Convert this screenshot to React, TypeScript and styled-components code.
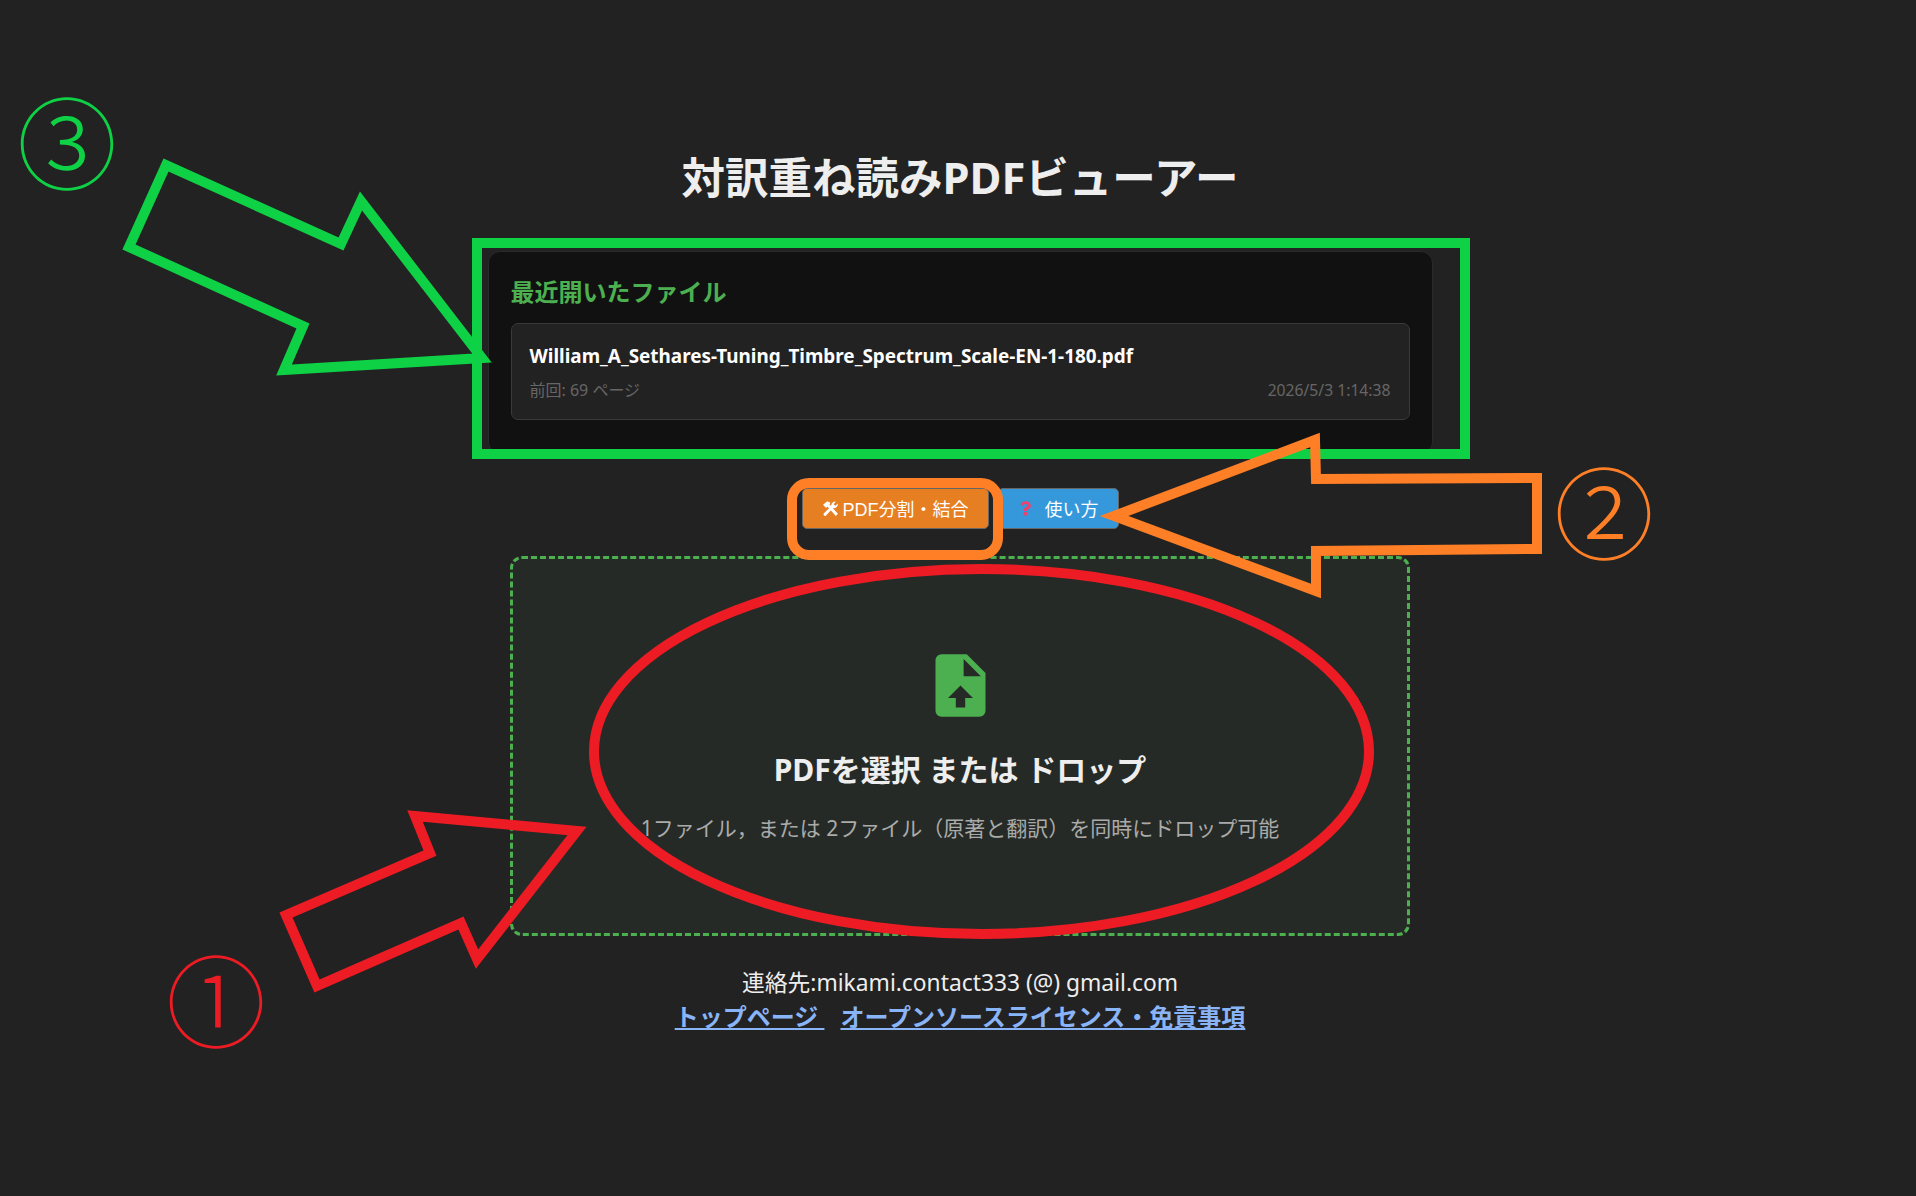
import React from "react";
import styled, { createGlobalStyle } from "styled-components";
import { FaQuestion } from "react-icons/fa";

const baseFont = `"Noto Sans", "Noto Sans CJK JP", sans-serif`;
const buttonFont = `"Liberation Sans", "Noto Sans CJK JP", sans-serif`;

const GlobalStyle = createGlobalStyle`
  html, body {
    margin: 0;
    padding: 0;
    background-color: #222222;
  }
  * {
    box-sizing: border-box;
  }
`;

const Page = styled.div`
  position: relative;
  width: 100%;
  height: 1196px;
  overflow: hidden;
  padding: 147px 0 0 4px;
  display: flex;
  flex-direction: column;
  align-items: center;
  background-color: #222222;
  color: #eeeeee;
  font-family: ${baseFont};
`;

const Title = styled.h1`
  margin: 0 0 44px;
  font-size: 43.5px;
  line-height: 60px;
  font-weight: 700;
  color: #eeeeee;
`;

const RecentBox = styled.section`
  width: 945px;
  padding: 20px 22px 22px;
  background-color: #111111;
  border: 1px solid #2a2a2a;
  border-radius: 12px;
`;

const RecentHeading = styled.h2`
  margin: 0 0 11px;
  font-size: 24px;
  line-height: 40px;
  font-weight: 700;
  color: #4caf50;
`;

const RecentItem = styled.div`
  height: 97px;
  margin-bottom: 11px;
  padding: 18px;
  background-color: #222222;
  border: 1px solid #3a3a3a;
  border-radius: 7px;
`;

const FileName = styled.div`
  font-size: 18.9px;
  line-height: 28px;
  font-weight: 700;
  color: #ffffff;
`;

const FileMeta = styled.div`
  display: flex;
  justify-content: space-between;
  margin-top: 9px;
  font-size: 16px;
  line-height: 22px;
  color: #666666;
`;

const FileDate = styled.span`
  font-size: 15.7px;
`;

const ButtonRow = styled.div`
  display: flex;
  gap: 9px;
  margin-top: 34px;
`;

const ToolButton = styled.button<{ $bg: string }>`
  display: flex;
  align-items: center;
  height: 41px;
  padding: 0 19px 2px;
  background-color: ${(p) => p.$bg};
  border: 1px solid #666666;
  border-radius: 5px;
  color: #ffffff;
  font-family: ${buttonFont};
  font-size: 18px;
  white-space: pre;
`;

const WrenchIcon = styled.svg`
  width: 17px;
  height: 17px;
  margin: 2px 4px 0 0;
  fill: #ffffff;
`;

const QuestionIcon = styled(FaQuestion)`
  width: 11px;
  height: 17px;
  margin: 2px 14px 0 2px;
  color: #f0406c;
`;

const DropZone = styled.div`
  display: flex;
  flex-direction: column;
  align-items: center;
  width: 900px;
  height: 380px;
  margin-top: 27px;
  padding-top: 89px;
  background-color: #262a26;
  border: 3px dashed #4caf50;
  border-radius: 12px;
`;

const UploadIcon = styled.svg`
  display: block;
  width: 75px;
  height: 75px;
  fill: #4caf50;
`;

const DropTitle = styled.h3`
  margin: 25px 0 0;
  font-size: 30px;
  line-height: 44px;
  font-weight: 700;
  color: #eeeeee;
`;

const DropHint = styled.p`
  margin: 18px 0 0;
  font-size: 21px;
  line-height: 36px;
  color: #aaaaaa;
`;

const Footer = styled.footer`
  margin-top: 30px;
  text-align: center;
  font-size: 22.8px;
  line-height: 34px;
  color: #eeeeee;
`;

const FooterLinks = styled.div`
  display: flex;
  justify-content: center;
  gap: 16px;
`;

const FooterLink = styled.a`
  color: #8ab4f8;
  font-size: 24px;
  font-weight: 700;
  text-decoration: underline;
  white-space: pre;
`;

const Overlay = styled.svg`
  position: absolute;
  left: 0;
  top: 0;
  width: 1916px;
  height: 1196px;
  pointer-events: none;
`;

const Marker = styled.span<{ $color: string; $left: number; $top: number }>`
  position: absolute;
  left: ${(p) => p.$left}px;
  top: ${(p) => p.$top}px;
  width: 92px;
  height: 92px;
  color: ${(p) => p.$color};
  font-family: "Noto Sans CJK JP", sans-serif;
  font-size: 100px;
  font-weight: 300;
  line-height: 92px;
  text-align: center;
`;

const GREEN = "#0ed145";
const ORANGE = "#ff7f27";
const RED = "#ed1c24";

const annotations = [
  {
    color: GREEN,
    points: "166,165 341,244 361,201 482,358 284,370 303,326 129,247",
  },
  {
    color: ORANGE,
    points: "1114,516 1315,440 1316,479 1537,478 1537,549 1316,551 1316,591",
  },
  {
    color: RED,
    points: "577,831 415,816 430,853 286,915 317,986 461,923 477,959",
  },
];

export default function App() {
  return (
    <Page>
      <GlobalStyle />
      <Title>対訳重ね読みPDFビューアー</Title>
      <RecentBox>
        <RecentHeading>最近開いたファイル</RecentHeading>
        <RecentItem>
          <FileName>William_A_Sethares-Tuning_Timbre_Spectrum_Scale-EN-1-180.pdf</FileName>
          <FileMeta>
            <span>前回: 69 ページ</span>
            <FileDate>2026/5/3 1:14:38</FileDate>
          </FileMeta>
        </RecentItem>
      </RecentBox>
      <ButtonRow>
        <ToolButton $bg="#e67e22">
          <WrenchIcon viewBox="0 0 16 16">
            <path d="M1 4.5 5 1.2l3 1.4-1 1.5 8 8.9-2 2-8-8.9-1.2 1.5z" />
            <path d="M15 3.2 12.6 5.3 11 4l2-2.5a4 4 0 0 0-4.4 4.3L1.6 12.8a1.5 1.5 0 0 0 2 2l6.8-7.2A4 4 0 0 0 15 3.2z" />
          </WrenchIcon>
          PDF分割・結合
        </ToolButton>
        <ToolButton $bg="#3498db">
          <QuestionIcon />
          使い方
        </ToolButton>
      </ButtonRow>
      <DropZone>
        <UploadIcon viewBox="0 0 24 24">
          <path
            fillRule="evenodd"
            d="M14 2H6c-1.1 0-2 .9-2 2v16c0 1.1.9 2 2 2h12c1.1 0 2-.9 2-2V8l-6-6zM13 9V3.5L18.5 9H13zM12 12l-4 4h2.5v3h3v-3H16l-4-4z"
          />
        </UploadIcon>
        <DropTitle>PDFを選択 または ドロップ</DropTitle>
        <DropHint>1ファイル，または 2ファイル（原著と翻訳）を同時にドロップ可能</DropHint>
      </DropZone>
      <Footer>
        <div>連絡先:mikami.contact333 (@) gmail.com</div>
        <FooterLinks>
          <FooterLink href="#top">{"トップページ "}</FooterLink>
          <FooterLink href="#license">オープンソースライセンス・免責事項</FooterLink>
        </FooterLinks>
      </Footer>

      <Overlay viewBox="0 0 1916 1196">
        <rect x="477" y="243" width="988" height="211" fill="none" stroke={GREEN} strokeWidth="10" />
        <rect x="792" y="483" width="206" height="72" rx="17" fill="none" stroke={ORANGE} strokeWidth="10" />
        <ellipse cx="981.5" cy="751.5" rx="387.5" ry="182.5" fill="none" stroke={RED} strokeWidth="10" />
        {annotations.map((a) => (
          <polygon
            key={a.color}
            points={a.points}
            fill="none"
            stroke={a.color}
            strokeWidth="10"
            strokeMiterlimit="12"
          />
        ))}
      </Overlay>
      <Marker $color={GREEN} $left={17} $top={93}>③</Marker>
      <Marker $color={ORANGE} $left={1554} $top={463}>②</Marker>
      <Marker $color={RED} $left={166} $top={951}>①</Marker>
    </Page>
  );
}
